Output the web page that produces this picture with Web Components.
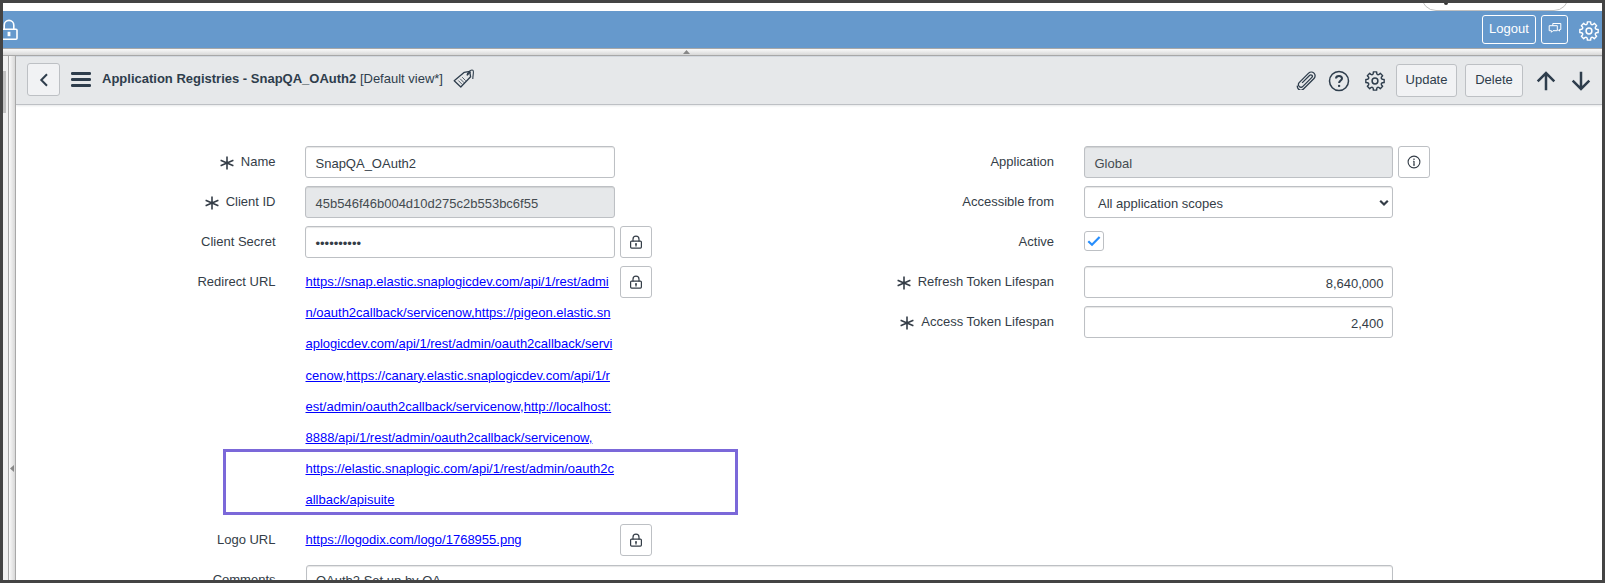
<!DOCTYPE html>
<html lang="en">
<head>
<meta charset="utf-8">
<title>SnapQA_OAuth2 | Application Registries</title>
<style>
html,body{margin:0;height:100%;overflow:hidden}
body{font:13px "Liberation Sans",Arial,sans-serif;color:#343d47}
</style>
</head>
<body>
<app-shell></app-shell>
<script>
const define = (name, html) => {
  const t = document.createElement('template');
  t.innerHTML = html;
  customElements.define(name, class extends HTMLElement {
    constructor() {
      super();
      this.attachShadow({mode: 'open'}).appendChild(t.content.cloneNode(true));
    }
  });
};

// Eight-toothed gear with curved valleys between the teeth.
const gearPath = (() => {
  let d = '';
  const pt = (a, r) => (10 + r * Math.cos(a)).toFixed(2) + ' ' + (10 + r * Math.sin(a)).toFixed(2);
  for (let i = 0; i < 8; i++) {
    const a = i * Math.PI / 4 - Math.PI / 2;
    d += (i ? '' : 'M' + pt(a - .23, 7.7)) + 'L' + pt(a - .18, 9.3) + 'L' + pt(a + .18, 9.3) + 'L' + pt(a + .23, 7.7) +
      'Q' + pt(a + Math.PI / 8, 6.1) + ' ' + pt(a + Math.PI / 4 - .23, 7.7);
  }
  return d + 'Z';
})();

const icons = {
  lock: [14, 16, '<path d="M4 7.500V5.200a3 3 0 0 1 6 0v2.300" stroke-width="1.200"/><rect x="1.600" y="7.100" width="10.800" height="7" rx="1" stroke-width="1.200"/><path d="M7 9.500v3" stroke-width="1.300"/><circle cx="7" cy="10" r=".5"/>'],
  biglock: [18, 22, '<path d="M4.200 10V6.200a4.800 4.800 0 0 1 9.600 0V10" stroke-width="1.600"/><rect x="1.200" y="10.200" width="15.800" height="10" rx="1" stroke-width="1.600"/><path d="M9 12.800v4.400" stroke-width="2.800"/>'],
  gear: [20, 20, '<path d="' + gearPath + '" stroke-width="1.400" stroke-linejoin="round"/><circle cx="10" cy="10" r="2.900" stroke-width="1.500"/>'],
  back: [10, 14, '<path d="M8 1.300 2.300 7 8 12.700" stroke-width="2"/>'],
  menu: [20, 15, '<path d="M1.300 1.500h17.400M1.300 7.500h17.400M1.300 13.500h17.400" stroke-width="2.900" stroke-linecap="round"/>'],
  tag: [22, 20, '<path d="M1.200 11.800 11.300 3.300l5.400-.9.900 5.400L7.800 18Z" stroke-width="1.300" stroke-linejoin="round"/><path d="m5.300 11.500 4 4M7.200 9.800l4 4M9.200 8.200l3.500 3.500" stroke-width=".8"/><path d="M14 6.300c.3-3.200 4.700-6.300 6-4.900 1.100 1-.2 5-.2 8.600" stroke-width="1.100"/><path d="m14.100 6.400 3.200-3.700" stroke-width="1.300"/>'],
  clip: [22, 20, '<g transform="rotate(-45 11 10)" stroke-width="1.300"><path d="M.3 7.200C-1 8-1.500 9.300-1.500 10.300c0 2 1.500 3.600 3.600 3.600H17a3.800 3.800 0 0 0 0-7.600H3.600a2.300 2.300 0 0 0 0 5.300H16.300a1.500 1.500 0 0 0 0-3H5.500" /></g>'],
  help: [22, 22, '<circle cx="11" cy="11" r="9.500" stroke-width="1.500"/><path d="M8 8.500C8.100 5.100 14 5.200 14 8.500c0 2-2.900 2.100-2.900 4.600" stroke-width="2"/><path d="M11.100 14.900v2" stroke-width="2.100"/>'],
  up: [20, 20, '<path d="M10 19.300V2.300M1.700 10.300 10 2l8.300 8.300" stroke-width="2.500"/>'],
  down: [20, 20, '<path d="M10 .7v17M1.700 9.700 10 18l8.300-8.300" stroke-width="2.500"/>'],
  chat: [14, 12, '<path d="M4.800 3.600V1.500h8v6h-1.300v1.700L9.900 7.500M1.200 3.700h8.100v5H5L3.400 10.300V8.700H1.200Z" stroke-width="1"/>'],
  info: [14, 14, '<circle cx="7" cy="7" r="5.900" stroke-width="1.100"/><path d="M7 5.900v4.500M7 3.600v1.300" stroke-width="1.200"/><path d="M6 6.200h1M6 10.100h2" stroke-width=".7"/>'],
  star: [14, 14, '<path d="M7 .4v13.200M.6 4.300l12.800 5.400M.6 9.700l12.800-5.400" stroke-width="1.600"/>'],
  check: [14, 12, '<path d="m1.300 6.200 3.700 3.600L12.600 2" stroke-width="2.200"/>'],
  caret: [10, 8, '<path d="m1.200 1.700 3.800 3.800 3.800-3.800" stroke-width="2.200"/>'],
};
customElements.define('ui-icon', class extends HTMLElement {
  constructor() {
    super();
    this.attachShadow({mode: 'open'});
  }
  connectedCallback() {
    const [w, h, body] = icons[this.getAttribute('name')];
    this.shadowRoot.innerHTML = `<style>:host{display:block;flex:none;width:${w}px;height:${h}px}svg{display:block}</style>
      <svg width="${w}" height="${h}" viewBox="0 0 ${w} ${h}" fill="none" stroke="currentColor">${body}</svg>`;
  }
});

define('ui-button', `<style>
:host{display:flex;box-sizing:border-box;height:33px;align-items:center;justify-content:center;flex:none;
 background:#f1f2f4;border:1px solid #bdc0c4;border-radius:3px;line-height:15px}
:host([square]){width:32px;height:32px;background:#fff}
:host([banner]){height:29px;background:transparent;border-color:#fff;color:#fff;padding-bottom:3px}
</style><slot></slot>`);

define('ui-input', `<style>
:host{display:flex;box-sizing:border-box;width:310px;height:32px;align-items:center;flex:none;padding:2px 9.500px 0;
 background:#fff;border:1px solid #bdc0c4;border-radius:3px;box-shadow:inset 0 1px 1px rgba(0,0,0,.1);line-height:15px;white-space:nowrap}
:host([readonly]){background:#e6e8ea;color:#444b50}
:host([numeric]){justify-content:flex-end;padding-right:8.500px}
:host([choice]){justify-content:space-between;padding:2px 3px 0 13px}
</style><slot></slot>`);

define('ui-checkbox', `<style>
:host{display:flex;box-sizing:border-box;width:20px;height:20px;margin-top:5px;align-items:center;justify-content:center;
 border:1px solid #bdc0c4;border-radius:3px;color:#278efc}
</style><ui-icon name="check"></ui-icon>`);

define('form-row', `<style>
:host{display:flex;align-items:flex-start;min-height:32px;margin-bottom:8px}
.label{display:flex;width:var(--label-width);margin-right:var(--label-gap,29px);justify-content:flex-end;flex:none;line-height:15px;padding-top:8px;white-space:nowrap}
ui-icon{display:none;margin:1.500px 7px 0 0}
:host([required]) ui-icon{display:block}
.field{display:flex;gap:5px;align-items:flex-start}
</style><div class="label"><ui-icon name="star"></ui-icon><slot name="label"></slot></div><div class="field"><slot></slot></div>`);

define('ui-link', `<style>
:host{display:block;width:310px;line-height:31.200px;white-space:nowrap;box-sizing:border-box;padding-left:.5px}
a{color:#00f;text-decoration:underline}
</style><a href="#"><slot></slot></a>`);

define('app-banner', `<style>
:host{display:block;flex:none}
.tab{height:8px;background:#fff;overflow:hidden;position:relative}
.pill{position:absolute;right:33px;bottom:0;width:146px;height:29px;border:1px solid #c0c0c0;border-radius:15px}
.mark{position:absolute;right:154px;top:-2px;width:4px;height:4px;border-radius:2px;background:#333}
.bar{height:37px;background:#6699cc;color:#fff;display:flex;align-items:flex-start;box-sizing:border-box}
.bar>ui-icon:first-child{margin:8px auto 0 -3px}
ui-button{margin-top:4px}
.out{width:54px;margin-right:5px}.talk{width:27px;margin-right:11px}
.gear{margin:9.500px 3px 0 0}
</style><div class="tab"><div class="pill"></div><div class="mark"></div></div>
<div class="bar"><ui-icon name="biglock"></ui-icon><ui-button class="out" banner>Logout</ui-button>
<ui-button class="talk" banner><ui-icon name="chat"></ui-icon></ui-button><ui-icon class="gear" name="gear"></ui-icon></div>`);

define('form-header', `<style>
:host{display:flex;box-sizing:border-box;height:49px;flex:none;background:#e6e8ea;border-bottom:1px solid #bdc0c4;box-shadow:inset 0 1px #d3d8df,0 1px 2px #e6e8ea;padding:7px 11px 0 11px;color:#2e3d4c}
.back{width:33px;margin-right:11px}
.menu{margin:9px 11px 0 0}
.title{line-height:15px;margin:8px 10px 0 0;white-space:nowrap}
.tag{margin:6px auto 0 0}
.clip{margin:7px 10px 0 0}.help{margin:6.500px 15px 0 0}.gear{margin:7.500px 11px 0 0}
.upd,.del{margin-top:1px;padding-bottom:2px}
.upd{width:61px;margin-right:8px}.del{width:58px;margin-right:13px}
.up{margin:7.500px 15px 0 0}.down{margin-top:7.500px}
</style><ui-button class="back"><ui-icon name="back"></ui-icon></ui-button><ui-icon class="menu" name="menu"></ui-icon>
<div class="title"><b>Application Registries - SnapQA_OAuth2</b> [Default view*]</div><ui-icon class="tag" name="tag"></ui-icon>
<ui-icon class="clip" name="clip"></ui-icon><ui-icon class="help" name="help"></ui-icon><ui-icon class="gear" name="gear"></ui-icon>
<ui-button class="upd">Update</ui-button><ui-button class="del">Delete</ui-button>
<ui-icon class="up" name="up"></ui-icon><ui-icon class="down" name="down"></ui-icon>`);

define('record-form', `<style>
:host{display:block;position:relative;padding-top:41px}
.cols{display:grid;grid-template-columns:779px 1fr}
.left{--label-width:259.500px;--label-gap:29.500px}
.right{--label-width:259px;--label-gap:30px}
.comments{--label-width:259.500px;--label-gap:29.500px}
.mark{position:absolute;left:207px;top:344px;width:515px;height:66px;box-sizing:border-box;border:3px solid #7b68d9}
</style>
<div class="cols"><div class="left">
<form-row required><span slot="label">Name</span><ui-input>SnapQA_OAuth2</ui-input></form-row>
<form-row required><span slot="label">Client ID</span><ui-input readonly>45b546f46b004d10d275c2b553bc6f55</ui-input></form-row>
<form-row><span slot="label">Client Secret</span><ui-input>••••••••••</ui-input><ui-button square><ui-icon name="lock"></ui-icon></ui-button></form-row>
<form-row><span slot="label">Redirect URL</span><ui-link>https://snap.elastic.snaplogicdev.com/api/1/rest/admi<br>n/oauth2callback/servicenow,https://pigeon.elastic.sn<br>aplogicdev.com/api/1/rest/admin/oauth2callback/servi<br>cenow,https://canary.elastic.snaplogicdev.com/api/1/r<br>est/admin/oauth2callback/servicenow,http://localhost:<br>8888/api/1/rest/admin/oauth2callback/servicenow,<br>https://elastic.snaplogic.com/api/1/rest/admin/oauth2c<br>allback/apisuite</ui-link><ui-button square><ui-icon name="lock"></ui-icon></ui-button></form-row>
<form-row style="margin-bottom:8.400px"><span slot="label">Logo URL</span><ui-link>https://logodix.com/logo/1768955.png</ui-link><ui-button square><ui-icon name="lock"></ui-icon></ui-button></form-row>
</div><div class="right">
<form-row><span slot="label">Application</span><ui-input style="width:309px" readonly>Global</ui-input><ui-button square><ui-icon name="info"></ui-icon></ui-button></form-row>
<form-row><span slot="label">Accessible from</span><ui-input style="width:309px" choice>All application scopes<ui-icon name="caret"></ui-icon></ui-input></form-row>
<form-row><span slot="label">Active</span><ui-checkbox></ui-checkbox></form-row>
<form-row required><span slot="label">Refresh Token Lifespan</span><ui-input style="width:309px" numeric>8,640,000</ui-input></form-row>
<form-row required><span slot="label">Access Token Lifespan</span><ui-input style="width:309px" numeric>2,400</ui-input></form-row>
</div></div>
<form-row class="comments"><span slot="label">Comments</span><ui-input style="width:1087px;margin:1px 0 0 1px;padding-left:9px;height:40px;align-items:flex-start;padding-top:7px">OAuth2 Set up by QA</ui-input></form-row>
<div class="mark"></div>`);

define('app-shell', `<style>
:host{display:flex;flex-direction:column;box-sizing:border-box;width:1605px;height:583px;border:3px solid #444;overflow:hidden;background:#fff}
.hsplit{height:8px;flex:none;box-sizing:border-box;border:1px solid #a8a8a8;border-width:1px 0;background:linear-gradient(#fafafa,#d8d8d8);display:flex;padding-left:680px}
.hsplit svg{display:block}
.body{display:flex;flex:1;min-height:0}
.nav{width:5px;background:#f1f1f1}
.scroll{margin-top:15px;width:3px;height:42px;background:#c1c1c1}
.vsplit{width:8px;box-sizing:border-box;border:1px solid #a8a8a8;border-width:0 1px;background:linear-gradient(90deg,#fafafa,#d8d8d8);display:flex;align-items:flex-start;padding-top:409px}
.main{flex:1;min-width:0;overflow:hidden}
</style>
<app-banner></app-banner>
<div class="hsplit"><svg width="7" height="6"><path d="M3.500 1 7 5H0Z" fill="#888"/></svg></div>
<div class="body"><div class="nav"><div class="scroll"></div></div>
<div class="vsplit"><svg width="6" height="7"><path d="M1 3.500 5 0v7Z" fill="#888"/></svg></div>
<div class="main"><form-header></form-header><record-form></record-form></div></div>`);
</script>
</body>
</html>
